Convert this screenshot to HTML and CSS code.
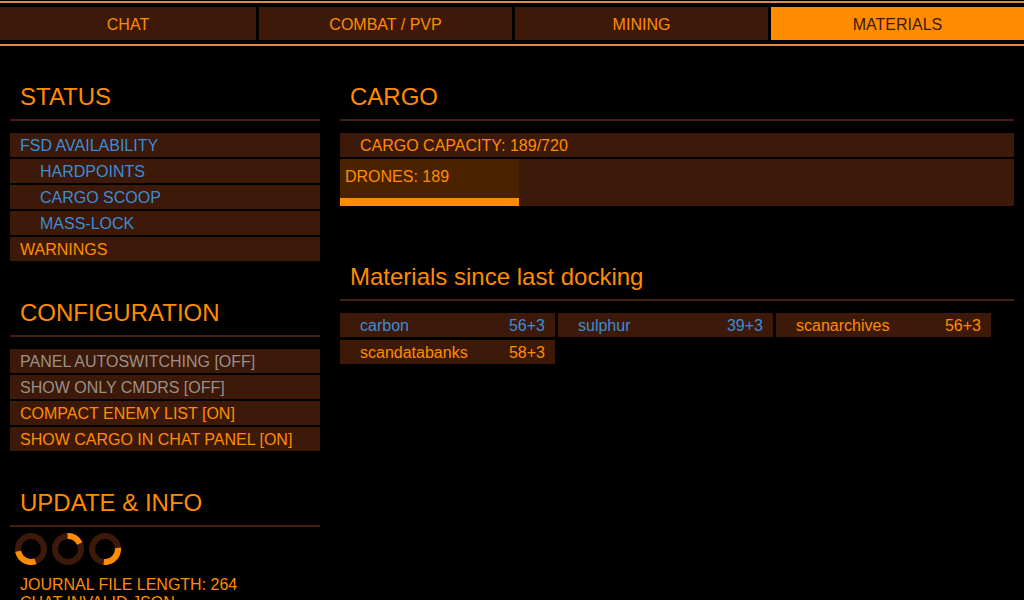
FILE: index.html
```html
<!DOCTYPE html>
<html lang="en">
<head>
<meta charset="utf-8">
<title>Overlay</title>
<link rel="stylesheet" href="styles.css">
</head>
<body>
<nav class="tabs">
  <div class="tab">CHAT</div>
  <div class="tab">COMBAT / PVP</div>
  <div class="tab">MINING</div>
  <div class="tab active">MATERIALS</div>
</nav>
<main class="layout">
  <div class="col">
    <section class="section">
      <h2 class="heading">STATUS</h2>
      <ul class="rows">
        <li class="row blue">FSD AVAILABILITY</li>
        <li class="row blue indent">HARDPOINTS</li>
        <li class="row blue indent">CARGO SCOOP</li>
        <li class="row blue indent">MASS-LOCK</li>
        <li class="row">WARNINGS</li>
      </ul>
    </section>
    <section class="section">
      <h2 class="heading">CONFIGURATION</h2>
      <ul class="rows">
        <li class="row grey">PANEL AUTOSWITCHING [OFF]</li>
        <li class="row grey">SHOW ONLY CMDRS [OFF]</li>
        <li class="row">COMPACT ENEMY LIST [ON]</li>
        <li class="row">SHOW CARGO IN CHAT PANEL [ON]</li>
      </ul>
    </section>
    <section class="section">
      <h2 class="heading">UPDATE &amp; INFO</h2>
      <div class="spinners">
        <svg class="spinner" viewBox="0 0 32 32"><circle class="track" cx="16" cy="16" r="13"/><circle class="arc" cx="16" cy="16" r="13" stroke-dasharray="22.7 100" transform="rotate(70 16 16)"/></svg>
        <svg class="spinner" viewBox="0 0 32 32"><circle class="track" cx="16" cy="16" r="13"/><circle class="arc" cx="16" cy="16" r="13" stroke-dasharray="15 100" transform="rotate(-92 16 16)"/></svg>
        <svg class="spinner" viewBox="0 0 32 32"><circle class="track" cx="16" cy="16" r="13"/><circle class="arc" cx="16" cy="16" r="13" stroke-dasharray="22.7 100" transform="rotate(-5 16 16)"/></svg>
      </div>
      <div class="info">
        <div>JOURNAL FILE LENGTH: 264</div>
        <div>CHAT INVALID JSON</div>
      </div>
    </section>
  </div>
  <div class="col">
    <section class="section">
      <h2 class="heading">CARGO</h2>
      <ul class="rows">
        <li class="row capacity">CARGO CAPACITY: 189/720</li>
      </ul>
      <div class="meter">
        <div class="meter-fill" style="width: 26.5%">DRONES: 189</div>
      </div>
    </section>
    <section class="section materials">
      <h2 class="heading">Materials since last docking</h2>
      <div class="tiles">
        <div class="tile blue"><span>carbon</span><span>56+3</span></div>
        <div class="tile blue"><span>sulphur</span><span>39+3</span></div>
        <div class="tile"><span>scanarchives</span><span>56+3</span></div>
        <div class="tile"><span>scandatabanks</span><span>58+3</span></div>
      </div>
    </section>
  </div>
</main>
</body>
</html>
```
FILE: styles.css
```css
html, body {
  margin: 0;
  padding: 0;
  background: #000;
  overflow: hidden;
  height: 600px;
}

body {
  font-family: "Liberation Sans", Arial, sans-serif;
  font-size: 16px;
  color: #ff8c00;
}

.tabs {
  display: grid;
  grid-template-columns: repeat(4, 1fr);
  margin-top: 1px;
  padding: 4px 0;
  border-top: 2px solid #e08a42;
  border-bottom: 2px solid #e08a42;
}

.tab {
  height: 33px;
  line-height: 35px;
  text-align: center;
  background: #3d1909;
  color: #ff8c00;
  overflow: hidden;
}

.tab + .tab {
  border-left: 3px solid #000;
}

.tab.active {
  background: #ff8c00;
  color: #3d1909;
}

.layout {
  display: grid;
  grid-template-columns: 310px 674px;
  column-gap: 20px;
  padding: 0 10px;
}

.section {
  margin-top: 27px;
}

.section + .section {
  margin-top: 28px;
}

.heading {
  margin: 0;
  padding: 10px 10px 8px;
  font-size: 24px;
  font-weight: normal;
  line-height: 28px;
  border-bottom: 2px solid #46200e;
}

.rows {
  list-style: none;
  margin: 12px 0 0;
  padding: 0;
}

.row {
  height: 24px;
  line-height: 26px;
  padding-left: 10px;
  margin-bottom: 2px;
  background: #3d1909;
  white-space: nowrap;
  overflow: hidden;
}

.row.indent {
  padding-left: 30px;
}

.row.capacity {
  padding-left: 20px;
}

.blue {
  color: #3b8dd6;
}

.grey {
  color: #9a9088;
}

.meter {
  background: #3d1909;
}

.meter-fill {
  box-sizing: border-box;
  padding: 6px 5px 9px;
  line-height: 24px;
  background: #4a2200;
  border-bottom: 8px solid #ff8c00;
  white-space: nowrap;
}

.section.materials {
  margin-top: 47px;
}

.tiles {
  display: grid;
  grid-template-columns: repeat(3, 215px);
  gap: 3px;
  margin-top: 12px;
}

.tile {
  display: flex;
  justify-content: space-between;
  height: 24px;
  line-height: 26px;
  padding: 0 10px 0 20px;
  background: #3d1909;
  overflow: hidden;
}

.spinners {
  display: flex;
  gap: 5px;
  margin: 6px 0 0 5px;
}

.spinner {
  width: 32px;
  height: 32px;
  display: block;
}

.spinner circle {
  fill: none;
  stroke-width: 6;
}

.spinner .track {
  stroke: #3d1909;
}

.spinner .arc {
  stroke: #ff8c00;
}

.info {
  margin-top: 11px;
  padding-left: 10px;
  line-height: 18px;
}
```
